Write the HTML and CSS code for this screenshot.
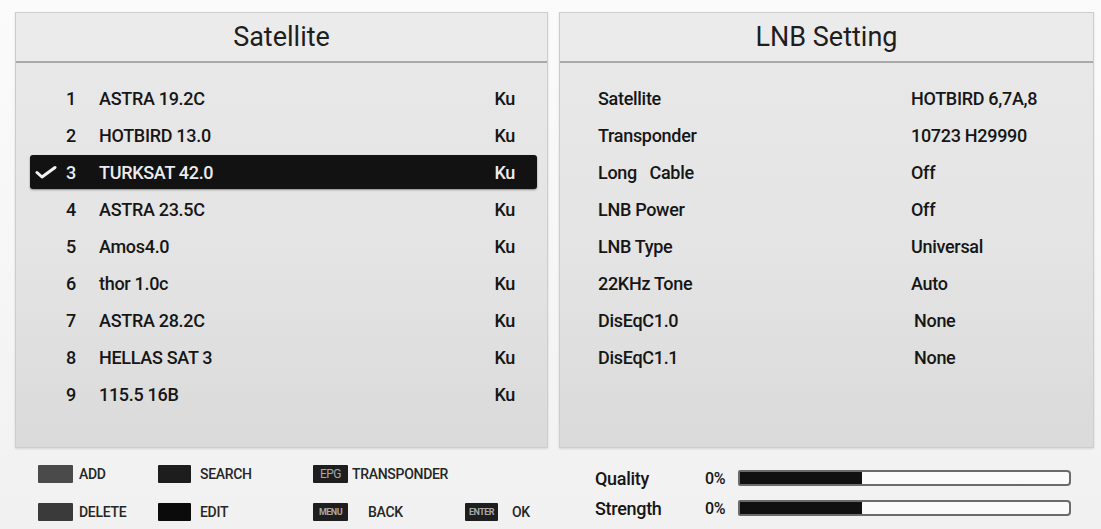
FILE: index.html
```html
<!DOCTYPE html>
<html lang="en">
<head>
  <meta charset="UTF-8" />
  <meta name="viewport" content="width=device-width, initial-scale=1.0"/>
  <title>Satellite / LNB Setting</title>
  <link rel="stylesheet" href="styles.css">
</head>
<body>
  <div class="screen">

    <!-- Satellite list -->
    <div class="panel">
      <div class="panel-head">Satellite</div>
      <ul class="sat-list">
        <li class="sat-row"><span class="mark"></span><span class="num">1</span><span class="name">ASTRA 19.2C</span><span class="band">Ku</span></li>
        <li class="sat-row"><span class="mark"></span><span class="num">2</span><span class="name">HOTBIRD 13.0</span><span class="band">Ku</span></li>
        <li class="sat-row selected">
          <span class="mark">
            <svg width="22" height="14" viewBox="0 0 22 14"><polyline points="2,7.5 7,12 20,2.5" fill="none" stroke="#f2f2f2" stroke-width="3" stroke-linecap="round" stroke-linejoin="round"/></svg>
          </span>
          <span class="num">3</span><span class="name">TURKSAT 42.0</span><span class="band">Ku</span>
        </li>
        <li class="sat-row"><span class="mark"></span><span class="num">4</span><span class="name">ASTRA 23.5C</span><span class="band">Ku</span></li>
        <li class="sat-row"><span class="mark"></span><span class="num">5</span><span class="name">Amos4.0</span><span class="band">Ku</span></li>
        <li class="sat-row"><span class="mark"></span><span class="num">6</span><span class="name">thor 1.0c</span><span class="band">Ku</span></li>
        <li class="sat-row"><span class="mark"></span><span class="num">7</span><span class="name">ASTRA 28.2C</span><span class="band">Ku</span></li>
        <li class="sat-row"><span class="mark"></span><span class="num">8</span><span class="name">HELLAS SAT 3</span><span class="band">Ku</span></li>
        <li class="sat-row"><span class="mark"></span><span class="num">9</span><span class="name">115.5 16B</span><span class="band">Ku</span></li>
      </ul>
    </div>

    <!-- LNB settings -->
    <div class="panel">
      <div class="panel-head">LNB Setting</div>
      <ul class="lnb-list">
        <li class="lnb-row"><span>Satellite</span><span>HOTBIRD 6,7A,8</span></li>
        <li class="lnb-row"><span>Transponder</span><span>10723 H29990</span></li>
        <li class="lnb-row"><span>Long&nbsp;&nbsp;&nbsp;Cable</span><span>Off</span></li>
        <li class="lnb-row"><span>LNB Power</span><span>Off</span></li>
        <li class="lnb-row"><span>LNB Type</span><span>Universal</span></li>
        <li class="lnb-row"><span>22KHz Tone</span><span>Auto</span></li>
        <li class="lnb-row"><span>DisEqC1.0</span><span class="shift">None</span></li>
        <li class="lnb-row"><span>DisEqC1.1</span><span class="shift">None</span></li>
      </ul>
    </div>

    <!-- key hints -->
    <div class="keys">
      <span class="key red"></span><span class="key-label">ADD</span>
      <span class="key green"></span><span class="key-label gap-9">SEARCH</span>
      <span class="key tag">EPG</span><span class="key-label gap-4 wide">TRANSPONDER</span>

      <span class="key yellow"></span><span class="key-label">DELETE</span>
      <span class="key blue"></span><span class="key-label gap-9">EDIT</span>
      <span class="key tag small">MENU</span><span class="key-label gap-20">BACK</span>
      <span class="key tag small">ENTER</span><span class="key-label gap-14">OK</span>
    </div>

    <!-- signal meters -->
    <div class="meters">
      <div class="meter">
        <span class="meter-name">Quality</span>
        <span class="meter-val">0%</span>
        <div class="bar"><div class="bar-fill" style="width: 37%"></div></div>
      </div>
      <div class="meter">
        <span class="meter-name">Strength</span>
        <span class="meter-val">0%</span>
        <div class="bar"><div class="bar-fill" style="width: 37%"></div></div>
      </div>
    </div>

  </div>
</body>
</html>
```

FILE: styles.css
```css
body {
  margin: 0;
  font-family: Roboto, "Liberation Sans", sans-serif;
  color: #161616;
  background: linear-gradient(to bottom, #fbfbfb, #f1f1f1);
  height: 529px;
  overflow: hidden;
}

ul {
  list-style: none;
  margin: 0;
  padding: 0;
}

.screen {
  display: grid;
  grid-template-columns: 533px 535px;
  grid-template-rows: 436px auto;
  column-gap: 11px;
  padding: 12px 0 0 15px;
}

.panel {
  border: 1px solid #cdcdcd;
  background: linear-gradient(to bottom, #e9e9e9 0%, #e4e4e4 55%, #dadada 100%);
  box-shadow: 0 1px 2px rgba(0,0,0,0.12);
}

.panel-head {
  height: 48px;
  line-height: 48px;
  text-align: center;
  font-size: 27px;
  color: #1e1e1e;
  background: #ebebeb;
  border-bottom: 2px solid #a9a9a9;
}

/* satellite list */

.sat-list {
  display: flex;
  flex-direction: column;
  gap: 3px;
  padding: 18px 10px 0 14px;
}

.sat-row {
  display: grid;
  grid-template-columns: 28px 18px 1fr auto;
  align-items: center;
  height: 34px;
  font-size: 18px;
  font-weight: 500;
  letter-spacing: -0.3px;
  border-radius: 3px;
}

.sat-row .num {
  text-align: right;
}

.sat-row .name {
  padding-left: 23px;
}

.sat-row .band {
  padding-right: 22px;
}

.sat-row .mark {
  display: flex;
  align-items: center;
  padding-left: 5px;
}

.sat-row.selected {
  background: #121212;
  color: #ececec;
  box-shadow: 0 1px 2px rgba(0,0,0,0.4);
}

/* lnb list */

.lnb-list {
  display: flex;
  flex-direction: column;
  gap: 3px;
  padding: 18px 0 0 38px;
}

.lnb-row {
  display: grid;
  grid-template-columns: 313px 1fr;
  align-items: center;
  height: 34px;
  font-size: 18px;
  font-weight: 500;
  letter-spacing: -0.3px;
}

.lnb-row .shift {
  padding-left: 3px;
}

/* key hints */

.keys {
  display: grid;
  grid-template-columns: 35px 85px 33px 122px 35px 117px 33px auto;
  grid-template-rows: 18px 18px;
  row-gap: 20px;
  align-items: center;
  padding: 17px 0 0 23px;
}

.key {
  display: block;
  height: 18px;
  border-radius: 1px;
}

.key.red { background: #4a4a4a; }
.key.green { background: #1d1d1d; }
.key.yellow { background: #3a3a3a; }
.key.blue { background: #0b0b0b; }

.key.tag {
  background: #1e1e1e;
  color: #a8a8a8;
  font-size: 12px;
  line-height: 18px;
  text-align: center;
  letter-spacing: -0.5px;
}

.key.tag.small {
  font-size: 9px;
  font-weight: 700;
}

.key-label {
  font-size: 14px;
  font-weight: 500;
  letter-spacing: -0.3px;
  color: #262626;
  padding-left: 6px;
  white-space: nowrap;
}

.key-label.gap-4 { padding-left: 4px; }
.key-label.gap-9 { padding-left: 9px; }
.key-label.gap-14 { padding-left: 14px; }
.key-label.gap-20 { padding-left: 20px; }
.key-label.wide { grid-column: span 3; }

/* meters */

.meters {
  display: flex;
  flex-direction: column;
  gap: 14px;
  padding: 22px 0 0 36px;
}

.meter {
  display: flex;
  align-items: center;
  height: 16px;
  font-size: 18px;
  font-weight: 500;
  letter-spacing: -0.3px;
}

.meter-name {
  width: 110px;
}

.meter-val {
  width: 33px;
  font-size: 16px;
}

.bar {
  width: 329px;
  height: 12px;
  border: 2px solid #6b6b6b;
  border-radius: 2px 4px 4px 2px;
  background: #fafafa;
}

.bar-fill {
  height: 100%;
  background: #101010;
}
```
